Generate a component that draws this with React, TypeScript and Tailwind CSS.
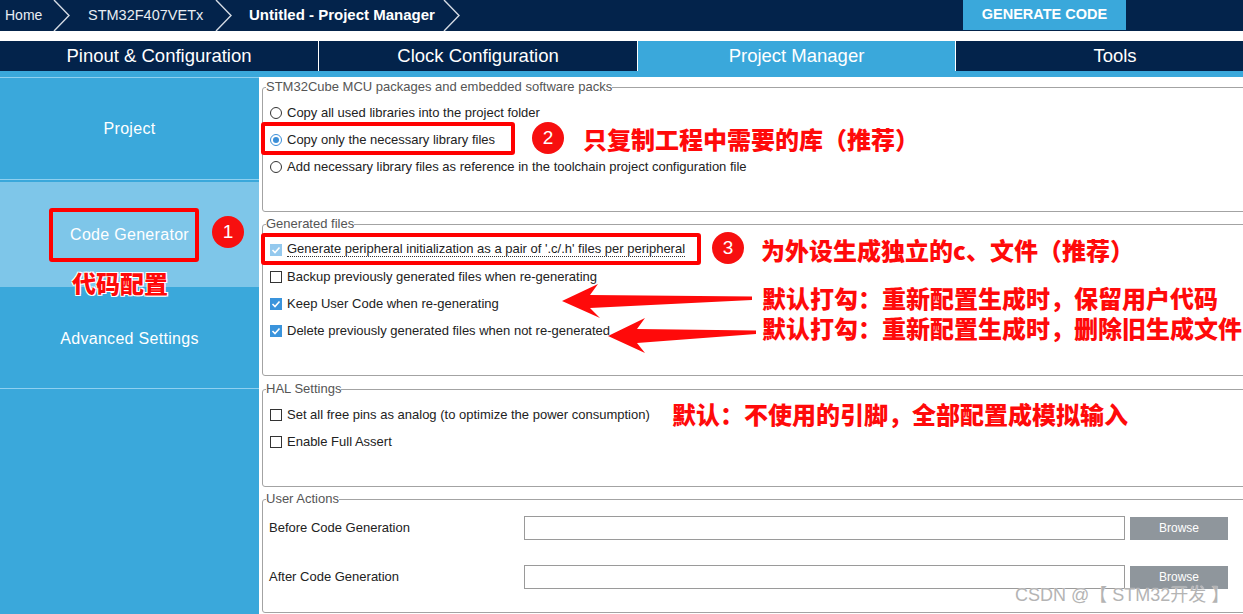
import React from "react";

const UI = "font-['Liberation_Sans',Arial,sans-serif]";
const CJK = "font-['Noto_Sans_CJK_SC','Noto_Sans',sans-serif]";

function Chevron() {
  return (
    <svg width="18" height="31" viewBox="0 0 18 31" className="shrink-0">
      <polyline points="1,0 16,15.5 1,31" fill="none" stroke="#d5dbe4" strokeWidth="1.4" />
    </svg>
  );
}

function Radio({ checked }: { checked?: boolean }) {
  return (
    <span
      className={`flex h-[12px] w-[12px] shrink-0 items-center justify-center rounded-full border bg-white ${
        checked ? "border-[#3b8fd8]" : "border-[#333]"
      }`}
    >
      {checked && <span className="h-[6px] w-[6px] rounded-full bg-[#3b8fd8]" />}
    </span>
  );
}

function Check({ state }: { state: "on" | "off" | "dis" }) {
  if (state === "off") {
    return <span className="h-[12px] w-[12px] shrink-0 border border-[#333] bg-white" />;
  }
  return (
    <span
      className={`flex h-[12px] w-[12px] shrink-0 items-center justify-center ${
        state === "on" ? "bg-[#3a94dc]" : "bg-[#94c9ee]"
      }`}
    >
      <svg width="10" height="10" viewBox="0 0 10 10">
        <polyline points="1.5,5 4,7.5 8.5,2.5" fill="none" stroke="#fff" strokeWidth="1.6" />
      </svg>
    </span>
  );
}

function Group({
  title,
  className,
  children,
}: {
  title: string;
  className: string;
  children: React.ReactNode;
}) {
  return (
    <fieldset className={`rounded-[3px] border border-[#a3a3a3] ${className}`}>
      <legend className="ml-[3px] text-[13px] leading-[14px] text-[#555]">{title}</legend>
      {children}
    </fieldset>
  );
}

function Row({ children }: { children: React.ReactNode }) {
  return <div className="flex h-[27px] items-center gap-[5px] pl-[7px] text-[13px] text-[#222]">{children}</div>;
}

const redText =
  "absolute whitespace-nowrap text-[24px] font-black leading-[26px] text-[#ff0a0a] [text-shadow:1px_1px_0_#fff,-1px_-1px_0_#fff,1px_-1px_0_#fff,-1px_1px_0_#fff]";

function Badge({ n, x, y }: { n: string; x: number; y: number }) {
  return (
    <div
      className={`absolute flex h-[32px] w-[32px] items-center justify-center rounded-full bg-[#f70f0f] text-[19px] text-white ${UI}`}
      style={{ left: x, top: y }}
    >
      {n}
    </div>
  );
}

export default function App() {
  return (
    <div className={`relative h-[614px] w-[1243px] overflow-hidden bg-white ${UI}`}>
      {/* top bar */}
      <div className="flex h-[31px] items-center bg-[#03234b] text-[14px] text-white">
        <span className="ml-[5px] w-[48px] text-[#e8edf3]">Home</span>
        <Chevron />
        <span className="ml-[17px] w-[127px] text-[14.5px] text-[#e8edf3]">STM32F407VETx</span>
        <Chevron />
        <span className="ml-[16px] w-[194px] text-[15px] font-bold">Untitled - Project Manager</span>
        <Chevron />
        <div className="ml-[502px] flex h-[30px] w-[163px] items-center justify-center self-start bg-[#3aa8db] text-[14.5px] font-bold text-white">
          GENERATE CODE
        </div>
      </div>
      <div className="h-[10px]" />
      {/* tabs */}
      <div className="flex h-[30px] gap-px bg-white text-[18.5px] text-white">
        <div className="flex w-[318px] shrink-0 items-center justify-center bg-[#03234b]">Pinout &amp; Configuration</div>
        <div className="flex w-[318px] shrink-0 items-center justify-center bg-[#03234b]">Clock Configuration</div>
        <div className="flex w-[317px] shrink-0 items-center justify-center bg-[#3aa8db]">Project Manager</div>
        <div className="flex w-[318px] shrink-0 items-center justify-center bg-[#03234b]">Tools</div>
      </div>
      <div className="h-[6px] bg-[#3aa8db]" />
      {/* body */}
      <div className="flex h-[537px]">
        <div className="flex w-[259px] shrink-0 flex-col border-t border-[#8fd0f0] bg-[#3aa8db] text-[16px] tracking-[0.3px] text-white">
          <div className="flex h-[102px] items-center justify-center border-b border-[#8fd0f0]">Project</div>
          <div className="h-[2px]" />
          <div className="flex h-[105px] items-center justify-center bg-[#7ec6e9]">Code Generator</div>
          <div className="flex h-[102px] items-center justify-center border-b border-[#8fd0f0] pt-[3px]">Advanced Settings</div>
        </div>
        <div className="flex w-[990px] shrink-0 flex-col pl-[3px] pt-[3px]">
          <Group title="STM32Cube MCU packages and embedded software packs" className="h-[132px] pt-[5px]">
            <Row>
              <Radio />
              <span>Copy all used libraries into the project folder</span>
            </Row>
            <Row>
              <Radio checked />
              <span>Copy only the necessary library files</span>
            </Row>
            <Row>
              <Radio />
              <span>Add necessary library files as reference in the toolchain project configuration file</span>
            </Row>
          </Group>
          <Group title="Generated files" className="mt-[5px] h-[159px] pt-[5px]">
            <Row>
              <Check state="dis" />
              <span className="border-b border-dotted border-[#333] leading-[14px]">
                Generate peripheral initialization as a pair of '.c/.h' files per peripheral
              </span>
            </Row>
            <Row>
              <Check state="off" />
              <span>Backup previously generated files when re-generating</span>
            </Row>
            <Row>
              <Check state="on" />
              <span>Keep User Code when re-generating</span>
            </Row>
            <Row>
              <Check state="on" />
              <span>Delete previously generated files when not re-generated</span>
            </Row>
          </Group>
          <Group title="HAL Settings" className="mt-[6px] h-[105px] pt-[5px]">
            <Row>
              <Check state="off" />
              <span>Set all free pins as analog (to optimize the power consumption)</span>
            </Row>
            <Row>
              <Check state="off" />
              <span>Enable Full Assert</span>
            </Row>
          </Group>
          <Group title="User Actions" className="mt-[5px] h-[121px] pt-[10px]">
            <div className="flex h-[24px] items-center pl-[6px] text-[13px] text-[#222]">
              <span className="w-[255px]">Before Code Generation</span>
              <div className="h-[24px] w-[601px] border border-[#9a9a9a] bg-white" />
              <div className="ml-[5px] flex h-[23px] w-[98px] items-center justify-center bg-[#8f969c] text-[12px] text-white">Browse</div>
            </div>
            <div className="mt-[25px] flex h-[24px] items-center pl-[6px] text-[13px] text-[#222]">
              <span className="w-[255px]">After Code Generation</span>
              <div className="h-[24px] w-[601px] border border-[#9a9a9a] bg-white" />
              <div className="ml-[5px] flex h-[23px] w-[98px] items-center justify-center bg-[#8f969c] text-[12px] text-white">Browse</div>
            </div>
          </Group>
        </div>
      </div>

      {/* annotations */}
      <div className="absolute left-[49px] top-[208px] h-[54px] w-[150px] rounded-[3px] border-[4px] border-[#ff0000]" />
      <Badge n="1" x={212} y={216} />
      <div className={`${redText} ${CJK} left-[72px] top-[270px]`}>代码配置</div>

      <div className="absolute left-[261px] top-[122px] h-[33px] w-[254px] rounded-[3px] border-[4px] border-[#ff0000]" />
      <Badge n="2" x={532} y={122} />
      <div className={`${redText} ${CJK} left-[583px] top-[126px]`}>只复制工程中需要的库（推荐）</div>

      <div className="absolute left-[261px] top-[233px] h-[32px] w-[440px] rounded-[3px] border-[4px] border-[#ff0000]" />
      <Badge n="3" x={712} y={232} />
      <div className={`${redText} ${CJK} left-[761px] top-[237px]`}>为外设生成独立的c、文件（推荐）</div>

      <svg className="absolute left-0 top-0" width="1243" height="614" viewBox="0 0 1243 614">
        <polygon
          points="562,301 598,284 590,295 752,296.5 752,300 590,308 600,318"
          fill="#ff0a0a"
        />
        <polygon
          points="608,336 645,318 637,329 756,330.5 756,334 637,343 645,353"
          fill="#ff0a0a"
        />
      </svg>
      <div className={`${redText} ${CJK} left-[762px] top-[285px]`}>默认打勾：重新配置生成时，保留用户代码</div>
      <div className={`${redText} ${CJK} left-[762px] top-[315px]`}>默认打勾：重新配置生成时，删除旧生成文件</div>
      <div className={`${redText} ${CJK} left-[672px] top-[401px]`}>默认：不使用的引脚，全部配置成模拟输入</div>

      <div
        className={`absolute left-[1015px] top-[583px] whitespace-nowrap text-[18px] leading-[24px] text-[#b4b4b4] [text-shadow:0_0_1px_#fff] font-['Liberation_Sans','Noto_Sans_CJK_SC',sans-serif]`}
      >
        CSDN @【 STM32开发 】
      </div>
    </div>
  );
}
